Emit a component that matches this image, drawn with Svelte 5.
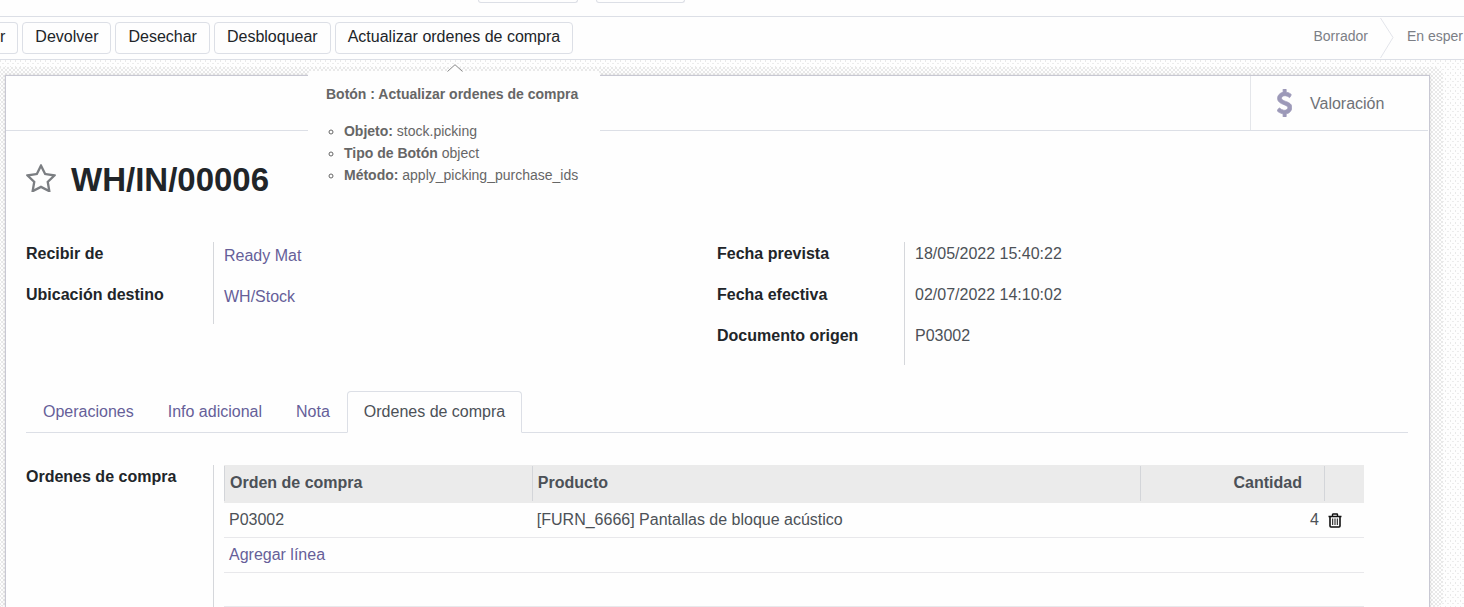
<script>
    const buttons = ['r', 'Devolver', 'Desechar', 'Desbloquear']
    const tabs = ['Operaciones', 'Info adicional', 'Nota', 'Ordenes de compra']
    let activeTab = $state('Ordenes de compra')

    const groups = [
        [
            { label: 'Recibir de', value: 'Ready Mat', link: true },
            { label: 'Ubicación destino', value: 'WH/Stock', link: true },
        ],
        [
            { label: 'Fecha prevista', value: '18/05/2022 15:40:22' },
            { label: 'Fecha efectiva', value: '02/07/2022 14:10:02' },
            { label: 'Documento origen', value: 'P03002' },
        ],
    ]

    const lines = [
        { order: 'P03002', product: '[FURN_6666] Pantallas de bloque acústico', qty: 4 },
    ]
</script>

<div class="page">
    <div class="top-strip" aria-hidden="true">
        <span class="stub wide"></span>
        <span class="stub"></span>
    </div>

    <header class="statusbar">
        <div class="buttons">
            {#each buttons as name, i}
                <button class="btn" class:cut={i === 0}>{name}</button>
            {/each}
            <div class="with-tip">
                <button class="btn" aria-describedby="tip">Actualizar ordenes de compra</button>
                <div class="tooltip" role="tooltip" id="tip">
                    <svg class="arrow" viewBox="0 0 16 8">
                        <path d="M0 8 L8 0.5 L16 8Z" fill="#fefefe" />
                        <path d="M0.5 7.5 L8 0.7 L15.5 7.5" fill="none" stroke="#888" />
                    </svg>
                    <p class="tip-title">Botón : Actualizar ordenes de compra</p>
                    <ul>
                        <li><b>Objeto:</b> stock.picking</li>
                        <li><b>Tipo de Botón</b> object</li>
                        <li><b>Método:</b> apply_picking_purchase_ids</li>
                    </ul>
                </div>
            </div>
        </div>
        <div class="states">
            <span>Borrador</span>
            <svg class="chevron" viewBox="0 0 14 40">
                <path d="M0.5 0 L13 19.5 L0.5 40" fill="none" stroke="#e2e4ea" />
            </svg>
            <span>En esper</span>
        </div>
    </header>

    <main class="content">
        <div class="sheet">
            <div class="button-box">
                <button class="stat">
                    <svg class="dollar" viewBox="46 0 932 1792">
                        <path fill="currentColor" d="M978 1185q0 153-99.5 263.5t-258.5 136.5v175q0 14-9 23t-23 9h-135q-13 0-22.5-9.5t-9.5-22.5v-175q-66-9-127.5-31t-101.5-44.5-74-48-46.5-37.5-17.5-18q-17-21-2-41l103-135q7-10 23-12 15-2 24 9l2 2q113 99 243 125 37 8 74 8 81 0 142.5-43t61.5-122q0-28-15-53t-33.5-42-58.5-37.5-66-32-80-32.5q-39-16-61.5-25t-61.5-26.5-62.5-31-56.5-35.5-53.5-42.5-43.5-49-35.5-58-21-66.5-8.5-78q0-138 98-242t255-134v-180q0-13 9.5-22.5t22.5-9.5h135q14 0 23 9t9 23v176q57 6 110.5 23t87 33.5 63.5 37.5 39 29 15 14q17 18 5 38l-81 146q-8 15-23 16-14 3-27-7-3-3-14.5-12t-39-26.5-58.5-32-74.5-26-85.5-11.5q-95 0-155 43t-60 111q0 26 8.5 48t29.5 41.5 39.5 33 56 31 60.5 27 70 27.5q53 20 81 31.5t76 35 75.5 42.5 62 50 53 63.5 31.5 76.5 13 94z" stroke="currentColor" stroke-width="50" />
                    </svg>
                    <span>Valoración</span>
                </button>
            </div>

            <div class="body">
                <div class="title">
                    <button class="star" aria-label="Prioridad">
                        <svg viewBox="0 32 1664 1588">
                            <path fill="currentColor" d="M1137 1004l306-297-422-62-189-382-189 382-422 62 306 297-73 421 378-199 377 199zm527-357q0 22-26 48l-363 354 86 500q1 7 1 20 0 50-41 50-19 0-40-12l-449-236-449 236q-22 12-40 12-21 0-31.5-14.5t-10.5-35.5q0-6 2-20l86-500-364-354q-25-27-25-48 0-37 56-46l502-73 225-455q19-41 49-41t49 41l225 455 502 73q56 9 56 46z" />
                        </svg>
                    </button>
                    <h1>WH/IN/00006</h1>
                </div>

                <div class="groups">
                    {#each groups as group}
                        <dl class="group">
                            {#each group as field}
                                <dt>{field.label}</dt>
                                <dd>
                                    {#if field.link}
                                        <a href="#record">{field.value}</a>
                                    {:else}
                                        {field.value}
                                    {/if}
                                </dd>
                            {/each}
                        </dl>
                    {/each}
                </div>

                <div class="tabs" role="tablist">
                    {#each tabs as tab}
                        <button
                            class="tab"
                            class:active={tab === activeTab}
                            role="tab"
                            aria-selected={tab === activeTab}
                            onclick={() => (activeTab = tab)}>{tab}</button>
                    {/each}
                </div>

                <div class="lines">
                    <div class="lines-label" id="lines-label">Ordenes de compra</div>
                    <div class="lines-value">
                        <table aria-labelledby="lines-label">
                            <colgroup>
                                <col class="c-order" />
                                <col />
                                <col class="c-qty" />
                                <col class="c-del" />
                            </colgroup>
                            <thead>
                                <tr>
                                    <th>Orden de compra</th>
                                    <th>Producto</th>
                                    <th class="num">Cantidad</th>
                                    <th></th>
                                </tr>
                            </thead>
                            <tbody>
                                {#each lines as line}
                                    <tr>
                                        <td>{line.order}</td>
                                        <td>{line.product}</td>
                                        <td class="num">{line.qty}</td>
                                        <td class="del">
                                            <button class="trash" aria-label="Eliminar">
                                                <svg viewBox="0 0 14 15">
                                                    <path d="M0.5 3.5H13.5M4.5 3V1.5Q4.5 1 5 1H9Q9.5 1 9.5 1.5V3" fill="none" stroke="#111" stroke-width="1.4" />
                                                    <path d="M2 4V13Q2 14 3 14H11Q12 14 12 13V4" fill="none" stroke="#111" stroke-width="1.6" />
                                                    <path d="M4.7 5.5V12M7 5.5V12M9.3 5.5V12" stroke="#111" />
                                                </svg>
                                            </button>
                                        </td>
                                    </tr>
                                {/each}
                                <tr><td colspan="4"><a href="#add">Agregar línea</a></td></tr>
                                <tr class="blank"><td colspan="4"></td></tr>
                            </tbody>
                        </table>
                    </div>
                </div>
            </div>
        </div>
    </main>
</div>

<style>
:global(body) {
    margin: 0;
    background: #fefefe;
}

.page {
    display: flex;
    flex-direction: column;
    height: 100vh;
    overflow: hidden;
    font-family: "Liberation Sans", Arial, sans-serif;
    font-size: 16px;
    line-height: 24px;
    color: #4c5157;
}

button {
    font: inherit;
    color: inherit;
    background: none;
    border: 0;
    padding: 0;
    cursor: pointer;
}

a {
    color: #665f99;
    text-decoration: none;
}

.top-strip {
    display: flex;
    gap: 18px;
    flex: none;
    height: 16px;
    padding-left: 478px;
    border-bottom: 1px solid #dcdfe6;
}

.stub {
    width: 87px;
    height: 2px;
    border: 1px solid #dcdfe6;
    border-top: 0;
    border-radius: 0 0 4px 4px;
}

.stub.wide {
    width: 98px;
}

.statusbar {
    display: flex;
    justify-content: space-between;
    flex: none;
    height: 42px;
    border-bottom: 1px solid #dcdfe6;
}

.buttons {
    display: flex;
    align-items: flex-start;
    gap: 4px;
    padding-top: 5px;
}

.btn {
    height: 32px;
    padding: 0 12px 2px;
    border: 1px solid #dcdfe6;
    border-radius: 4px;
    background: #fefefe;
    color: #212529;
    white-space: nowrap;
}

/* scrolled past the left edge */
.btn.cut {
    padding-left: 0;
    border-left: 0;
    border-radius: 0 4px 4px 0;
}

.with-tip {
    position: relative;
}

.tooltip {
    position: absolute;
    z-index: 2;
    top: 49px;
    left: 50%;
    transform: translateX(-50%);
    box-sizing: border-box;
    width: 292px;
    padding: 12px 16px;
    border-radius: 4px;
    background: #fefefe;
    color: #666;
    font-size: 14px;
    line-height: 22px;
    white-space: nowrap;
}

.arrow {
    position: absolute;
    top: -7px;
    left: 50%;
    width: 16px;
    height: 8px;
    margin-left: -7px;
}

.tip-title {
    margin: 0 0 15px 2px;
    font-weight: bold;
}

.tooltip ul {
    margin: 0;
    padding-left: 20px;
    list-style: circle;
}

.states {
    display: flex;
    align-items: center;
    padding-right: 1px;
    font-size: 14px;
    color: #7c7f86;
    white-space: nowrap;
}

.states span {
    padding-bottom: 4px;
}

.chevron {
    width: 14px;
    height: 40px;
    margin: 0 13px 0 12px;
}

.content {
    display: flex;
    flex: 1;
    min-height: 0;
    padding: 15px 34px 0 5px;
    isolation: isolate;
    background-color: #fefefe;
    background-image:
        linear-gradient(#ebebeb, #ebebeb),
        linear-gradient(#ebebeb, #ebebeb);
    background-size: 5px 6px;
    background-position: 0 0, 2px 3px;
    background-image:
        conic-gradient(at 1px 2px, transparent 75%, #e9e9e9 0),
        conic-gradient(at 2px 1px, transparent 75%, #ececec 0);
}

.sheet {
    position: relative;
    display: flex;
    flex-direction: column;
    flex: 1;
    border: 1px solid #c8c8d3;
    border-bottom: 0;
    background: #fefefe;
    box-shadow: 0 0 3px #0002;
}

/* dithered shadow around the sheet */
.sheet::before {
    content: "";
    position: absolute;
    z-index: -1;
    inset: -9px -14px 0 -9px;
    border-radius: 8px;
    background: repeating-conic-gradient(#e9e9e9 0 25%, #fefefe 0 50%) 0 0 / 4px 4px;
}

.button-box {
    display: flex;
    justify-content: flex-end;
    flex: none;
    height: 54px;
    margin-right: 1px;
    border-bottom: 1px solid #dcdfe6;
}

.stat {
    display: flex;
    align-items: center;
    gap: 18px;
    box-sizing: border-box;
    width: 178px;
    padding-left: 26px;
    border-left: 1px solid #e4e6ea;
    color: #6f7277;
}

.stat span {
    padding-top: 2px;
}

.dollar {
    width: 15px;
    height: 28px;
    color: #9c99b8;
}

.body {
    display: flex;
    flex-direction: column;
    flex: 1;
    min-height: 0;
    padding: 0 21px 0 20px;
}

.title {
    display: flex;
    align-items: center;
    gap: 15px;
    padding-top: 29px;
}

.star {
    width: 30px;
    height: 29px;
    margin-bottom: 4px;
    color: #7b7e82;
}

.star svg {
    display: block;
}

h1 {
    margin: 0;
    font-size: 33px;
    line-height: 40px;
    color: #212529;
}

.groups {
    display: grid;
    grid-template-columns: 1fr 1fr;
    align-items: start;
    margin-top: 42px;
}

.group {
    display: grid;
    grid-template-columns: 187px 1fr;
    grid-auto-rows: 41px;
    margin: 0;
}

dt {
    font-weight: bold;
    color: #212529;
}

dd {
    margin: 0;
    padding-left: 10px;
    border-left: 1px solid #d5d7db;
}

dd a {
    display: inline-block;
    padding-top: 2px;
}

.tabs {
    display: flex;
    flex: none;
    margin-top: 26px;
    border-bottom: 1px solid #dcdfe6;
}

.tab {
    height: 42px;
    margin-bottom: -1px;
    padding: 0 16px;
    border: 1px solid transparent;
    border-radius: 4px 4px 0 0;
    color: #665f99;
}

.tab.active {
    border-color: #dcdfe6;
    border-bottom-color: #fefefe;
    background: #fefefe;
    color: #4c5157;
}

.lines {
    display: flex;
    flex: 1;
    margin-top: 32px;
}

.lines-label {
    width: 187px;
    font-weight: bold;
    color: #212529;
}

.lines-value {
    flex: 1;
    padding: 0 44px 0 10px;
    border-left: 1px solid #d5d7db;
}

table {
    width: 100%;
    border-spacing: 0;
    table-layout: fixed;
}

.c-order {
    width: 27%;
}

.c-qty {
    width: 184px;
}

.c-del {
    width: 40px;
}

th {
    box-sizing: border-box;
    height: 38px;
    padding: 0 6px 2px;
    text-align: left;
    background: #ebebeb linear-gradient(#d3d5d9, #d3d5d9) 0 1px / 1px 35px no-repeat;
}

td {
    box-sizing: border-box;
    height: 35px;
    padding: 0 5px;
    border-bottom: 1px solid #e8e8eb;
}

.blank td {
    height: 34px;
}

.num {
    text-align: right;
}

th.num {
    padding-right: 22px;
}

td.del {
    padding: 0 4px;
}

.trash {
    display: block;
    width: 14px;
    height: 15px;
}

.trash svg {
    display: block;
}
</style>
